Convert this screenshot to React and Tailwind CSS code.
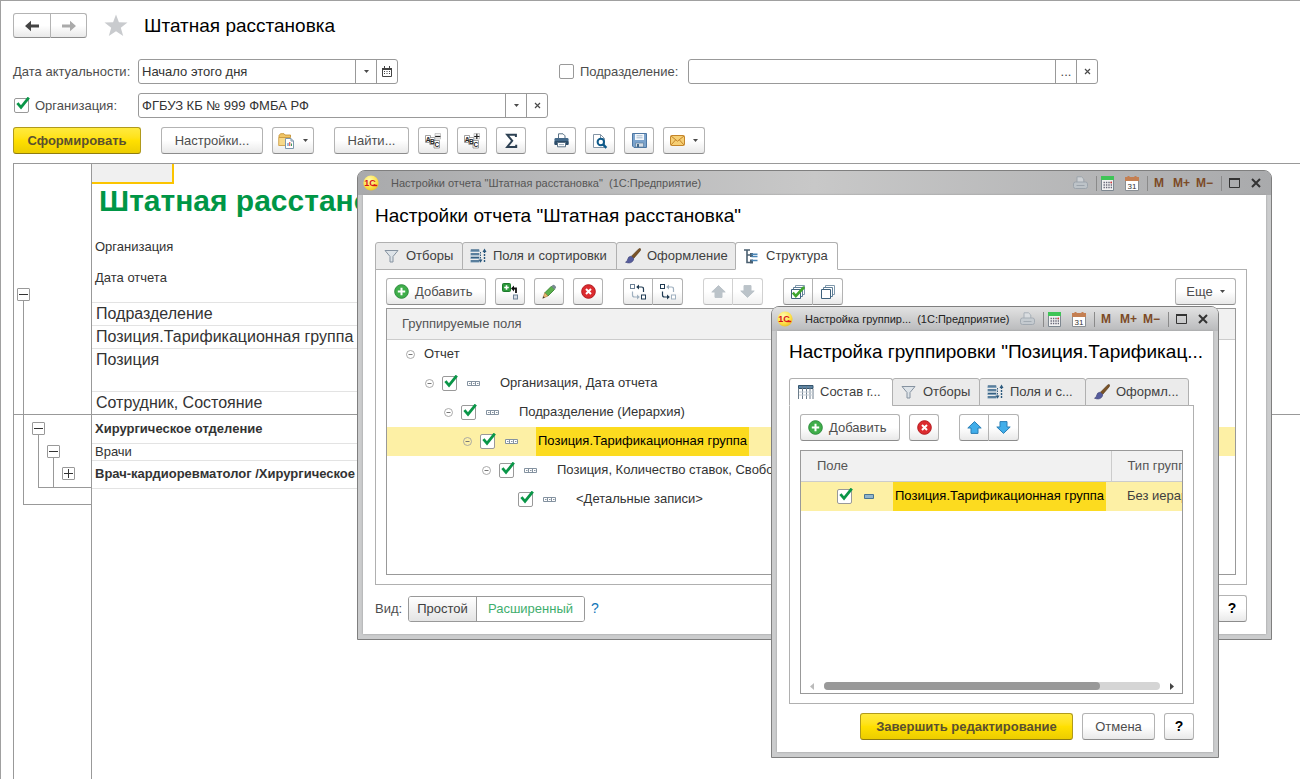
import React from "react";

const BTN =
  "flex shrink-0 items-center border border-[#b3b3b3] border-b-[#8c8c8c] bg-linear-to-b from-white from-50% to-[#e9e9e9] text-[#4d4d4d]";
const BTN_YELLOW =
  "flex h-[27px] shrink-0 items-center justify-center rounded-[3px] border border-[#b09a1c] border-b-[#8f7c10] bg-linear-to-b from-[#ffea3c] via-[#ffe000] to-[#eccd00] font-bold text-[#5a5030]";

function Btn({ className = "", children, ...rest }) {
  return (
    <button type="button" className={`${BTN} h-[27px] justify-center rounded-[3px] ${className}`} {...rest}>
      {children}
    </button>
  );
}

function AddButton() {
  return (
    <button type="button" className={`${BTN} h-[27px] w-[100px] gap-[6px] rounded-[3px] pl-[7px]`}>
      <AddIcon />
      Добавить
    </button>
  );
}

function Pair({ first, second, labels, disabled }) {
  const tone = disabled ? "opacity-60" : "";
  return (
    <div className={`flex shrink-0 ${tone}`}>
      <button type="button" disabled={disabled} aria-label={labels[0]} className={`${BTN} h-[27px] w-[30px] justify-center rounded-l-[3px]`}>
        {first}
      </button>
      <button type="button" disabled={disabled} aria-label={labels[1]} className={`${BTN} h-[27px] w-[30px] justify-center rounded-r-[3px] border-l-0`}>
        {second}
      </button>
    </div>
  );
}

function Check({ id, checked, label }) {
  return (
    <span className="relative block size-[15px] shrink-0">
      <input
        id={id}
        type="checkbox"
        defaultChecked={checked}
        aria-label={label}
        className="peer block size-[15px] appearance-none rounded-[2px] border border-[#999] bg-white"
      />
      <svg className="pointer-events-none absolute -top-px left-0 hidden peer-checked:block" width="17" height="15" viewBox="0 0 17 15">
        <path d="M3.4 6.2 L7 10.4 L14.8 0.6" fill="none" stroke="#0a9648" strokeWidth="2.8" />
      </svg>
    </span>
  );
}

const Caret = () => (
  <svg width="5" height="3" viewBox="0 0 5 3">
    <path d="M0 0H5L2.5 3Z" fill="#4a4a4a" />
  </svg>
);

const Cross = () => (
  <svg width="7" height="7" viewBox="0 0 7 7">
    <path d="M1 1L6 6M6 1L1 6" stroke="#4a4a4a" strokeWidth="1.2" />
  </svg>
);

function FieldButton({ label, children }) {
  return (
    <button type="button" aria-label={label} className="flex w-[21px] shrink-0 items-center justify-center border-l border-[#999] text-[#4a4a4a]">
      {children}
    </button>
  );
}

function Field({ id, value, className, children }) {
  return (
    <div className={`flex h-[25px] overflow-hidden rounded-[3px] border border-[#999] bg-white ${className}`}>
      <input id={id} defaultValue={value} className="min-w-0 flex-1 px-[3px] text-[#333] outline-none" />
      {children}
    </div>
  );
}

/* ---------- icons ---------- */

const ArrowLeft = ({ color }) => (
  <svg width="16" height="12" viewBox="0 0 16 12">
    <path d="M1 6L7 0.8V4.6H15V7.4H7V11.2Z" fill={color} />
  </svg>
);
const ArrowRight = ({ color }) => (
  <svg width="16" height="12" viewBox="0 0 16 12">
    <path d="M15 6L9 0.8V4.6H1V7.4H9V11.2Z" fill={color} />
  </svg>
);
const Star = () => (
  <svg width="24" height="23" viewBox="0 0 24 23">
    <path d="M12 0.5L14.9 8.2L23.5 8.6L16.8 13.8L19.2 22L12 17.3L4.8 22L7.2 13.8L0.5 8.6L9.1 8.2Z" fill="#c9cbce" />
  </svg>
);
const MiniCalendar = () => (
  <svg width="10" height="11" viewBox="0 0 10 11">
    <path d="M0.5 2.5H9.5V10.5H0.5Z" fill="#fff" stroke="#444" />
    <path d="M0 2H10V4H0Z M2 0H3V2H2Z M7 0H8V2H7Z" fill="#444" />
    <path d="M2 5.5H8M2 7.5H8" stroke="#444" strokeDasharray="1 1.5" />
  </svg>
);
const FolderReport = () => (
  <svg width="17" height="16" viewBox="0 0 17 16">
    <path d="M1 2.5L2.5 0.7H6L7 2H12.5V4.5H1Z" fill="#f0c566" stroke="#c08a2a" strokeWidth="0.8" />
    <path d="M0.7 4.5H10.5V12.5H0.7Z" fill="#f7d98a" stroke="#c9973a" strokeWidth="0.8" />
    <path d="M7.5 5.5H13L15.5 8V15.5H7.5Z" fill="#fff" stroke="#7d97ad" />
    <path d="M13 5.5V8H15.5" fill="none" stroke="#7d97ad" />
    <path d="M10 10V13" stroke="#3a7fb5" />
    <path d="M11.8 9V13" stroke="#d33" />
    <path d="M13.5 10.5V13" stroke="#3a9b5a" />
  </svg>
);
const AbcIcon = ({ plus }) => (
  <svg width="16" height="16" viewBox="0 0 16 16">
    <path d="M0.5 2.5H5.5V9.5H0.5Z" fill="#fff" stroke="#8a8a8a" strokeWidth="0.8" />
    <path d="M4.8 4.5H9.8V11.5H4.8Z" fill="#fff" stroke="#8a8a8a" strokeWidth="0.8" />
    <path d="M9 7.5H14.5V15H9Z" fill="#fff" stroke="#8a8a8a" strokeWidth="0.8" />
    <text x="0.8" y="8.5" fontSize="6.5" fontWeight="bold" fill="#222">A</text>
    <text x="5" y="10.5" fontSize="6.5" fontWeight="bold" fill="#222">B</text>
    <text x="9.5" y="13.8" fontSize="6.5" fontWeight="bold" fill="#222">C</text>
    <path d="M10 0.5H15.5V6H10Z" fill="#f2f2f2" stroke="#aaa" strokeWidth="0.6" />
    <path d={plus ? "M10.2 3.5H15.4M12.8 0.8V6" : "M10.2 3.5H15.4"} stroke="#222" strokeWidth="1.2" />
  </svg>
);
const Sigma = () => (
  <svg width="13" height="16" viewBox="0 0 13 16">
    <path d="M10.9 4V1.8H2.2L7.2 7.8L2.2 14H11.2V11.8" fill="none" stroke="#2d4153" strokeWidth="2" />
  </svg>
);
const Printer = () => (
  <svg width="15" height="15" viewBox="0 0 15 15">
    <path d="M4.5 5.5V0.8H9L11 2.8V5.5" fill="#fff" stroke="#5b7286" />
    <rect x="0.5" y="5" width="14" height="7" rx="1.2" fill="#44698a" />
    <rect x="0.5" y="8" width="14" height="4" rx="1" fill="#2c4c68" />
    <path d="M3.5 9.5H11.5V13.8H3.5Z" fill="#fff" stroke="#5b7286" />
    <path d="M5 11.6H10" stroke="#9ab" />
  </svg>
);
const PreviewIcon = () => (
  <svg width="16" height="16" viewBox="0 0 16 16">
    <path d="M1.5 1.5H8.5L12.5 5.5V14.5H1.5Z" fill="#fff" stroke="#8495a5" />
    <path d="M8.5 1.5V5.5H12.5" fill="none" stroke="#8495a5" />
    <circle cx="8.8" cy="9" r="3.2" fill="#fff" stroke="#0e5a8a" strokeWidth="2" />
    <path d="M11 11.3L14.4 14.8" stroke="#0e5a8a" strokeWidth="2.4" />
  </svg>
);
const Floppy = () => (
  <svg width="15" height="15" viewBox="0 0 15 15">
    <path d="M0.5 0.5H14.5V14.5H2L0.5 13Z" fill="#7ba3cc" stroke="#4d77a3" />
    <path d="M3 1H12V7H3Z" fill="#f4f8fc" />
    <path d="M4.5 2.8H10.5M4.5 4.8H10.5" stroke="#a5b9cc" />
    <path d="M3.5 10H11.5V14H3.5Z" fill="#d5dde5" stroke="#5d7f9f" strokeWidth="0.7" />
    <path d="M5 11H7V14H5Z" fill="#44698a" />
  </svg>
);
const Mail = () => (
  <svg width="15" height="11" viewBox="0 0 15 11">
    <rect x="0.5" y="0.5" width="14" height="10" rx="1" fill="#f6cf74" stroke="#c4852a" />
    <path d="M1 1L7.5 6.2L14 1M1 10L5.5 5M14 10L9.5 5" fill="none" stroke="#c4852a" />
  </svg>
);
const AddIcon = () => (
  <svg width="15" height="15" viewBox="0 0 15 15">
    <circle cx="7.5" cy="7.5" r="6.8" fill="#3fae4a" stroke="#2b8c3b" />
    <path d="M7.5 3.8V11.2M3.8 7.5H11.2" stroke="#fff" strokeWidth="2" />
  </svg>
);
const DeleteIcon = () => (
  <svg width="15" height="15" viewBox="0 0 15 15">
    <circle cx="7.5" cy="7.5" r="6.8" fill="#dc2b2f" stroke="#b3181d" />
    <path d="M5 5L10 10M10 5L5 10" stroke="#fff" strokeWidth="2" />
  </svg>
);
const AddGroupIcon = () => (
  <svg width="17" height="17" viewBox="0 0 17 17">
    <rect x="0.5" y="0.5" width="8" height="8" rx="1" fill="#2d9a3c" stroke="#1d7a2c" />
    <path d="M4.5 2.2V6.8M2.2 4.5H6.8" stroke="#fff" strokeWidth="1.6" />
    <path d="M14 10V5.5H11" fill="none" stroke="#111" strokeWidth="1.8" />
    <path d="M12 2.5L9 5.5L12 8.5Z" fill="#111" />
    <rect x="11.5" y="12" width="4" height="4" fill="#d5dce4" stroke="#6c8196" />
  </svg>
);
const Pencil = () => (
  <svg width="15" height="15" viewBox="0 0 15 15">
    <path d="M2.8 8.8L9.4 2.2L12.6 5.4L6 12Z" fill="#5cb04c" stroke="#2f7a2b" strokeWidth="0.8" />
    <path d="M9.4 2.2L10.8 0.9Q11.6 0.4 12.3 1.1L13.8 2.6Q14.4 3.3 13.9 4L12.6 5.4Z" fill="#7a8a92" />
    <path d="M2.8 8.8L6 12L0.8 14.2Z" fill="#e9bb72" stroke="#a8763a" strokeWidth="0.6" />
    <path d="M1.6 12.2L2.8 13.4L0.6 14.4Z" fill="#333" />
  </svg>
);
const MoveIcon = ({ down }) => {
  const light = "#9fb0bf";
  const dark = "#1f3a52";
  const a = down ? light : dark;
  const b = down ? dark : light;
  return (
    <svg width="16" height="16" viewBox="0 0 16 16">
      <rect x="0.5" y="0.5" width="4" height="4" fill="#fff" stroke={down ? dark : "#6c8196"} />
      <path d="M13.5 8V5Q13.5 3 11.5 3H8" fill="none" stroke={a} strokeWidth="1.2" />
      <path d="M9 0.4L6.2 3L9 5.6Z" fill={a} />
      <path d="M2.5 7.5V11Q2.5 13 4.5 13H7.5" fill="none" stroke={b} strokeWidth="1.2" />
      <path d="M7 10.4L9.8 13L7 15.6Z" fill={b} />
      <rect x="11.5" y="11" width="4" height="4" fill="#fff" stroke={a} />
    </svg>
  );
};
const BlockArrow = ({ down, fill, stroke }) => (
  <svg width="15" height="13" viewBox="0 0 15 13">
    <path
      d={down ? "M7.5 12.4L0.8 6H4V0.6H11V6H14.2Z" : "M7.5 0.6L0.8 7H4V12.4H11V7H14.2Z"}
      fill={fill}
      stroke={stroke}
      strokeWidth="1"
      strokeLinejoin="round"
    />
  </svg>
);
const StackIcon = ({ checked }) => (
  <svg width="16" height="16" viewBox="0 0 16 16">
    <path d="M5.5 1.5H14.5V10.5H5.5Z" fill="#fff" stroke="#7f98ac" />
    <path d="M3.5 3.5H12.5V12.5H3.5Z" fill="#fff" stroke="#5f7f98" />
    <path d="M1.5 5.5H10.5V14.5H1.5Z" fill="#fff" stroke="#3f617c" />
    {checked && <path d="M2.8 8.6L5.8 12L14.2 3" fill="none" stroke="#3fa52e" strokeWidth="2.6" />}
  </svg>
);
const Funnel = () => (
  <svg width="15" height="15" viewBox="0 0 15 15">
    <path d="M1 1.5H14L9 7.5V13H6V7.5Z" fill="#dde3e8" stroke="#8592a0" strokeLinejoin="round" />
  </svg>
);
const FieldsIcon = () => (
  <svg width="17" height="16" viewBox="0 0 17 16">
    <path d="M0.5 1.5H9.5V4H0.5Z M0.5 5H9.5V7.5H0.5Z M0.5 8.5H9.5V11H0.5Z M0.5 12H9.5V14.5H0.5Z" fill="#7fa0ba" />
    <path d="M1 2H9M1 6H9M1 9.5H9M1 13H9" stroke="#365f80" />
    <path d="M10.5 4V14" stroke="#365f80" strokeDasharray="1.5 1" />
    <path d="M8.5 11.5L10.5 14.8L12.5 11.5Z" fill="#2a587d" />
    <path d="M14.5 3V14.5" stroke="#2a587d" strokeWidth="1.4" strokeDasharray="2 1" />
    <path d="M12.5 4L14.5 0.6L16.5 4Z" fill="#2a587d" />
  </svg>
);
const Brush = () => (
  <svg width="16" height="16" viewBox="0 0 16 16">
    <path d="M15.5 0.8Q14.5 0 13.4 1.2L6.5 8.2L8.8 10.3L15 3Q16 1.6 15.5 0.8Z" fill="#7b5326" stroke="#4c3012" strokeWidth="0.6" />
    <path d="M6 8.2Q3.2 8.4 2.8 11Q2.6 13.3 0.5 14.2Q5 16 7.4 13.6Q9 12 8.6 10.4Z" fill="#565c9c" stroke="#363b74" strokeWidth="0.6" />
  </svg>
);
const TreeIcon = () => (
  <svg width="15" height="15" viewBox="0 0 15 15">
    <path d="M0 1H6M3 1V13.5H6M3 6H6" fill="none" stroke="#4a5f70" strokeWidth="1.6" />
    <path d="M6 4H9V8H6Z M6 10.5H9V14.5H6Z" fill="#4a5f70" />
    <path d="M7.5 5.2H13.5M7.5 7.4H13.5M7.5 11.6H13.5" stroke="#4a86b8" strokeWidth="1.5" />
  </svg>
);
const GridIcon = () => (
  <svg width="16" height="16" viewBox="0 0 16 16">
    <path d="M0.5 3.5H15.5V15H0.5Z" fill="#fff" />
    <path d="M0.5 1.5H15V4.5H0.5Z" fill="#5d86a6" stroke="#35546c" />
    <path d="M0.5 5V15M4.5 2V15M8.5 2V15M12 2V15M15 5V15" stroke="#6c7d8b" />
    <path d="M1 8H15M1 11H15" stroke="#c5ced6" />
  </svg>
);
const GroupMark = () => (
  <svg width="13" height="5" viewBox="0 0 13 5">
    <path d="M0.5 0.5H12.5V4.5H0.5Z M4.5 0.5V4.5M8.5 0.5V4.5" fill="#fff" stroke="#8492a0" />
    <path d="M2 2.5H3.5M6 2.5H7.5M10 2.5H11.5" stroke="#8492a0" />
  </svg>
);
const FieldMark = () => (
  <svg width="10" height="5" viewBox="0 0 10 5">
    <path d="M0.5 0.5H9.5V4.5H0.5Z" fill="#8fb4cc" stroke="#4a7592" />
  </svg>
);
const Collapse = () => (
  <svg width="9" height="9" viewBox="0 0 9 9">
    <circle cx="4.5" cy="4.5" r="4" fill="none" stroke="#a0a0a0" strokeWidth="0.9" />
    <path d="M2.5 4.5H6.5" stroke="#777" />
  </svg>
);

/* ---------- windows ---------- */

const Logo = () => (
  <svg width="16" height="16" viewBox="0 0 16 16">
    <defs>
      <radialGradient id="logo-fill" cx="0.4" cy="0.3" r="0.8">
        <stop offset="0" stopColor="#fffbb0" />
        <stop offset="0.6" stopColor="#fde148" />
        <stop offset="1" stopColor="#e6b422" />
      </radialGradient>
    </defs>
    <circle cx="8" cy="8" r="7.6" fill="url(#logo-fill)" />
    <text x="1.2" y="11" fontSize="9" fontWeight="bold" fill="#d8131c">1С</text>
    <path d="M9.5 10.5H14.2" stroke="#d8131c" strokeWidth="1.4" />
  </svg>
);

const Separator = () => <span className="h-[15px] w-px bg-[#8a8a8a]" />;

function TitleBar({ title, active }) {
  const tone = active
    ? "bg-linear-to-b from-[#e2e2e2] to-[#b9babc] text-[#222]"
    : "bg-linear-to-r from-[#a9aaac] via-[#c8c8c8] to-[#a9aaac] text-[#555]";
  return (
    <header className={`flex h-6 items-center rounded-t-[6px] pr-[10px] pl-[5px] ${tone}`}>
      <Logo />
      <span className="ml-3 flex-1 truncate text-[11px] whitespace-pre">{title}</span>
      <div className="flex items-center text-[12px] font-bold text-[#7c4a26]">
        <button type="button" aria-label="Печать" className="mr-2 opacity-60">
          <svg width="15" height="14" viewBox="0 0 15 14" className="block">
            <path d="M4 6V0.8H8.5L10.8 3V6" fill="#dfe4e9" stroke="#8b98a4" />
            <rect x="0.5" y="6" width="14" height="6.5" rx="2" fill="#c3ccd4" stroke="#8b98a4" />
            <path d="M3.5 9.5H11.5" stroke="#8b98a4" />
          </svg>
        </button>
        <Separator />
        <button type="button" aria-label="Калькулятор" className="ml-1">
          <svg width="13" height="15" viewBox="0 0 13 15" className="block">
            <path d="M0.5 0.5H12.5V14.5H0.5Z" fill="#f2f2f2" stroke="#7d8790" />
            <path d="M0 0H13V4H0Z" fill="#3fc457" />
            <path d="M2.5 6.5H11M2.5 9H11M2.5 11.5H11" stroke="#667" strokeWidth="1.4" strokeDasharray="1.4 1" />
            <path d="M9.5 5.8H11V7.2H9.5Z" fill="#d33" />
          </svg>
        </button>
        <button type="button" aria-label="Календарь" className="mr-2 ml-[11px]">
          <svg width="14" height="15" viewBox="0 0 14 15" className="block">
            <path d="M0.5 1.5H13.5V14.5H0.5Z" fill="#fff" stroke="#8a8f94" />
            <path d="M0 1H14V5H0Z M2.5 0H4.5V2H2.5Z M9.5 0H11.5V2H9.5Z" fill="#c47f52" />
            <text x="2.6" y="12.6" fontSize="8" fill="#333" fontWeight="normal">31</text>
          </svg>
        </button>
        <Separator />
        <button type="button" className="ml-[6px]">M</button>
        <button type="button" className="ml-[9px]">M+</button>
        <button type="button" className="mr-2 ml-[6px]">M−</button>
        <Separator />
        <button type="button" aria-label="Развернуть" className="ml-[7px]">
          <svg width="11" height="10" viewBox="0 0 11 10" className="block">
            <path d="M0.5 0.5H10.5V9.5H0.5Z" fill="none" stroke="#333" />
            <path d="M0 1H11" stroke="#333" strokeWidth="2" />
          </svg>
        </button>
        <button type="button" aria-label="Закрыть" className="ml-[11px]">
          <svg width="10" height="10" viewBox="0 0 10 10" className="block">
            <path d="M1 1L9 9M9 1L1 9" stroke="#333" strokeWidth="2" />
          </svg>
        </button>
      </div>
    </header>
  );
}

function Window({ title, active, className, children }) {
  return (
    <section className={`absolute flex flex-col rounded-t-[8px] border border-[#7f7f7f] bg-[#cbcccd] ${className}`}>
      <TitleBar title={title} active={active} />
      <div className="mx-[5px] mb-[5px] flex flex-1 flex-col bg-white pr-[19px] pl-3 shadow-[0_0_2px_#999]">{children}</div>
    </section>
  );
}

function Tabs({ items, active }) {
  return (
    <div role="tablist" className="relative -mb-px flex">
      {items.map(([icon, text, width], i) => (
        <button
          key={text}
          type="button"
          role="tab"
          aria-selected={i === active}
          className={`flex h-7 shrink-0 items-center gap-[6px] rounded-t-[3px] border border-[#b0b0b0] pl-[7px] whitespace-nowrap text-[#404040] ${width} ${
            i > 0 ? "-ml-px" : ""
          } ${i === active ? "border-b-white bg-white" : "bg-[#ebebeb]"}`}
        >
          <span className="flex w-[17px] justify-center">{icon}</span>
          {text}
        </button>
      ))}
    </div>
  );
}

/* ---------- report ---------- */

function Expander({ plus }) {
  return (
    <button
      type="button"
      aria-label={plus ? "Развернуть группу" : "Свернуть группу"}
      className="flex size-[13px] items-center justify-center rounded-[1px] border border-[#999] bg-white"
    >
      <svg width="9" height="9" viewBox="0 0 9 9">
        <path d={plus ? "M0 4.5H9M4.5 0V9" : "M0 4.5H9"} stroke="#333" />
      </svg>
    </button>
  );
}

function GroupOutline() {
  return (
    <div className="absolute top-[124px] left-[3px] w-[75px]">
      <Expander />
      <div className="ml-[6px] h-[204px] border-b border-l border-[#999] pt-[121px] pl-2">
        <Expander />
        <div className="ml-[6px] h-[53px] border-b border-l border-[#999] pt-[10px] pl-2">
          <Expander />
          <div className="ml-[6px] h-[29px] border-l border-[#999] pt-[9px] pl-2">
            <Expander plus />
          </div>
        </div>
      </div>
    </div>
  );
}

function Report() {
  return (
    <main className="relative flex flex-1 flex-col border-t border-l border-[#999] text-[#333]">
      <div className="flex border-b border-[#999]">
        <div className="w-[78px] border-r border-[#999]" />
        <table className="w-[1000px] border-collapse text-left text-[16px]">
          <tbody>
            <tr className="h-5">
              <td className="p-0">
                <div className="h-5 w-[82px] border-r-2 border-b-2 border-[#fbc400] bg-[#f0f0f0]" />
              </td>
            </tr>
            <tr className="h-[47px] align-top">
              <td className="px-[7px] py-0 text-[30px] leading-[34px] font-bold text-[#009646]">Штатная расстановка</td>
            </tr>
            <tr className="h-[31px]">
              <td className="px-[3px] py-0 text-[13px]">Организация</td>
            </tr>
            <tr className="h-10 align-top">
              <td className="border-b border-[#e3e3e3] px-[3px] py-0 text-[13px] leading-[31px]">Дата отчета</td>
            </tr>
            <tr className="h-[23px]">
              <td className="border-b border-[#e3e3e3] px-1 py-0 leading-[22px]">Подразделение</td>
            </tr>
            <tr className="h-[23px]">
              <td className="border-b border-[#e3e3e3] px-1 py-0 leading-[22px]">Позиция.Тарификационная группа</td>
            </tr>
            <tr className="h-[43px] align-top">
              <td className="border-b border-[#e3e3e3] px-1 py-0 leading-[22px]">Позиция</td>
            </tr>
            <tr className="h-[23px]">
              <td className="px-1 py-0 leading-[22px]">Сотрудник, Состояние</td>
            </tr>
          </tbody>
        </table>
      </div>
      <div className="flex flex-1">
        <div className="w-[78px] border-r border-[#999]" />
        <table className="w-[1000px] self-start border-collapse text-left text-[13px]">
          <tbody>
            <tr className="h-7">
              <td className="border-b border-[#e3e3e3] px-[3px] py-0 font-bold">Хирургическое отделение</td>
            </tr>
            <tr className="h-[17px]">
              <td className="border-b border-[#e3e3e3] px-[3px] py-0 leading-4">Врачи</td>
            </tr>
            <tr className="h-7">
              <td className="border-b border-[#e3e3e3] px-[3px] py-0 font-bold">
                Врач-кардиоревматолог /Хирургическое отделение/
              </td>
            </tr>
          </tbody>
        </table>
      </div>
      <GroupOutline />
    </main>
  );
}

/* ---------- report settings ---------- */

const TREE = [
  { text: "Отчет", indent: "pl-[19px]", root: true },
  { text: "Организация, Дата отчета", indent: "pl-[38px]" },
  { text: "Подразделение (Иерархия)", indent: "pl-[57px]" },
  { text: "Позиция.Тарификационная группа", indent: "pl-[76px]", selected: true },
  { text: "Позиция, Количество ставок, Свободно", indent: "pl-[95px]" },
  { text: "<Детальные записи>", indent: "pl-[114px]", leaf: true },
];

function TreeRow({ text, indent, root, leaf, selected }) {
  return (
    <tr className={selected ? "bg-[#fdf0a5]" : ""}>
      <td className="p-0">
        <div className={`flex h-[29px] items-center ${indent}`}>
          {leaf ? (
            <span className="w-[9px]" />
          ) : (
            <button type="button" aria-label="Свернуть">
              <Collapse />
            </button>
          )}
          {!root && (
            <span className="ml-2 flex items-center gap-[10px]">
              <Check checked label={text} />
              <GroupMark />
            </span>
          )}
          <span
            className={`flex h-full items-center whitespace-nowrap ${root ? "ml-2 px-[1px]" : "ml-[18px] px-[2px]"} ${
              selected ? "bg-[#fcdb1f] text-black" : "text-[#333]"
            }`}
          >
            {text}
          </span>
        </div>
      </td>
    </tr>
  );
}

function SettingsWindow() {
  return (
    <Window title={'Настройки отчета "Штатная расстановка"  (1С:Предприятие)'} className="top-[169px] left-[356px] h-[470px] w-[915px]">
      <h2 className="mt-[9px] mb-[14px] text-[19px] leading-6 text-black">Настройки отчета "Штатная расстановка"</h2>
      <Tabs
        active={3}
        items={[
          [<Funnel />, "Отборы", "w-[88px]"],
          [<FieldsIcon />, "Поля и сортировки", "w-[155px]"],
          [<Brush />, "Оформление", "w-[120px]"],
          [<TreeIcon />, "Структура", "w-[103px]"],
        ]}
      />
      <div className="flex flex-1 flex-col border border-[#b0b0b0] px-[10px] pt-2 pb-[9px]">
        <div className="flex">
          <AddButton />
          <Btn aria-label="Добавить группировку" className="ml-[9px] w-[30px]"><AddGroupIcon /></Btn>
          <Btn aria-label="Изменить" className="mr-[9px] ml-[9px] w-[30px]"><Pencil /></Btn>
          <Btn aria-label="Удалить" className="mr-5 w-[30px]"><DeleteIcon /></Btn>
          <Pair labels={["Сгруппировать", "Разгруппировать"]} first={<MoveIcon />} second={<MoveIcon down />} />
          <span className="w-5" />
          <Pair
            disabled
            labels={["Переместить вверх", "Переместить вниз"]}
            first={<BlockArrow fill="#8f9ca6" stroke="#8f9ca6" />}
            second={<BlockArrow down fill="#8f9ca6" stroke="#8f9ca6" />}
          />
          <span className="w-5" />
          <Pair labels={["Установить флажки", "Снять флажки"]} first={<StackIcon checked />} second={<StackIcon />} />
          <Btn className="ml-auto w-[61px] gap-[7px]">Еще<Caret /></Btn>
        </div>
        <div className="mt-[3px] flex-1 border border-[#999]">
          <table className="w-full border-collapse text-left">
            <thead>
              <tr>
                <th className="h-[30px] border-b border-[#ccc] bg-[#f1f1f1] py-0 pl-[15px] font-normal text-[#555]">Группируемые поля</th>
              </tr>
            </thead>
            <tbody>
              {TREE.map((row) => (
                <TreeRow key={row.text} {...row} />
              ))}
            </tbody>
          </table>
        </div>
      </div>
      <div className="mt-[10px] mb-3 flex items-center">
        <span className="w-[33px] text-[#4d4d4d]">Вид:</span>
        <div className="flex h-[26px] overflow-hidden rounded-[3px] border border-[#999]">
          <button type="button" className="w-[68px] border-r border-[#999] bg-linear-to-b from-white to-[#e4e4e4] text-[#404040]">Простой</button>
          <button type="button" className="w-[107px] bg-white text-[#3fae6e]">Расширенный</button>
        </div>
        <button type="button" aria-label="Подсказка" className="ml-[6px] text-[14px] text-[#0f75b8]">?</button>
        <Btn aria-label="Справка" className="ml-auto w-[30px] text-[14px] font-bold text-black">?</Btn>
      </div>
    </Window>
  );
}

/* ---------- grouping settings ---------- */

function GroupingWindow() {
  return (
    <Window active title="Настройка группир...  (1С:Предприятие)" className="top-[305px] left-[770px] h-[452px] w-[448px]">
      <h2 className="mt-[9px] mb-[14px] text-[19px] leading-6 whitespace-nowrap text-black">Настройка группировки "Позиция.Тарификац...</h2>
      <Tabs
        active={0}
        items={[
          [<GridIcon />, "Состав г...", "w-[104px]"],
          [<Funnel />, "Отборы", "w-[88px]"],
          [<FieldsIcon />, "Поля и с...", "w-[107px]"],
          [<Brush />, "Оформл...", "w-[104px]"],
        ]}
      />
      <div className="flex flex-1 flex-col border border-[#b0b0b0] px-[10px] pt-2 pb-[9px]">
        <div className="flex">
          <AddButton />
          <Btn aria-label="Удалить" className="mr-5 ml-[9px] w-[30px]"><DeleteIcon /></Btn>
          <Pair
            labels={["Переместить вверх", "Переместить вниз"]}
            first={<BlockArrow fill="#41aeea" stroke="#2a7eb5" />}
            second={<BlockArrow down fill="#41aeea" stroke="#2a7eb5" />}
          />
        </div>
        <div className="mt-[9px] flex flex-1 flex-col overflow-hidden border border-[#999]">
          <table className="w-[460px] table-fixed border-collapse text-left">
            <thead className="bg-[#f1f1f1] text-[#555]">
              <tr>
                <th className="h-[30px] w-[310px] border-r border-b border-[#ccc] py-0 pl-4 font-normal">Поле</th>
                <th className="border-b border-[#ccc] py-0 pl-4 font-normal whitespace-nowrap">Тип группировки</th>
              </tr>
            </thead>
            <tbody>
              <tr className="bg-[#fdf0a5]">
                <td className="p-0">
                  <div className="flex h-[29px] items-center pl-9">
                    <Check checked label="Позиция.Тарификационная группа" />
                    <span className="ml-3 w-[29px]"><FieldMark /></span>
                    <span className="flex h-full items-center bg-[#fcdb1f] px-[2px] whitespace-nowrap text-black">Позиция.Тарификационная группа</span>
                  </div>
                </td>
                <td className="py-0 pl-4 whitespace-nowrap text-[#404040]">Без иерархии</td>
              </tr>
            </tbody>
          </table>
          <div className="mt-auto flex items-center pr-2 pb-[3px] pl-[9px]">
            <svg width="4" height="7" viewBox="0 0 4 7"><path d="M4 0V7L0 3.5Z" fill="#bbb" /></svg>
            <div className="mx-[10px] h-2 flex-1 rounded-full bg-[#d5d5d5]">
              <div className="h-2 w-[82%] rounded-full bg-[#999]" />
            </div>
            <svg width="4" height="7" viewBox="0 0 4 7"><path d="M0 0V7L4 3.5Z" fill="#444" /></svg>
          </div>
        </div>
      </div>
      <div className="mt-[9px] mb-3 flex justify-end gap-[9px]">
        <button type="button" className={`${BTN_YELLOW} w-[213px]`}>Завершить редактирование</button>
        <Btn className="w-[73px]">Отмена</Btn>
        <Btn aria-label="Справка" className="w-[30px] text-[14px] font-bold text-black">?</Btn>
      </div>
    </Window>
  );
}

export default function App() {
  return (
    <div className="relative flex min-h-screen flex-col overflow-hidden border-t border-l border-[#a0a0a0] bg-white pt-3 pl-3 font-['Liberation_Sans',Arial,sans-serif] text-[13px] text-[#4d4d4d]">
      <header className="mb-[21px] flex h-[25px] items-center">
        <div className="flex">
          <button type="button" aria-label="Назад" className={`${BTN} h-[25px] w-[38px] justify-center rounded-l-[3px]`}><ArrowLeft color="#444" /></button>
          <button type="button" aria-label="Вперед" className={`${BTN} h-[25px] w-[36px] justify-center rounded-r-[3px] border-l-0`}><ArrowRight color="#aaa" /></button>
        </div>
        <button type="button" aria-label="В избранное" className="mr-4 ml-[17px]"><Star /></button>
        <h1 className="pt-[2px] text-[19px] text-black">Штатная расстановка</h1>
      </header>

      <div className="mb-[9px] flex flex-col gap-[9px]">
        <div className="flex items-center">
          <label htmlFor="date" className="w-[125px]">Дата актуальности:</label>
          <Field id="date" value="Начало этого дня" className="w-[260px]">
            <FieldButton label="Выбрать"><Caret /></FieldButton>
            <FieldButton label="Календарь"><MiniCalendar /></FieldButton>
          </Field>
          <span className="ml-[161px]"><Check id="unit-on" label="Отбор по подразделению" /></span>
          <label htmlFor="unit" className="ml-[6px] w-[108px]">Подразделение:</label>
          <Field id="unit" value="" className="w-[410px]">
            <FieldButton label="Выбрать">...</FieldButton>
            <FieldButton label="Очистить"><Cross /></FieldButton>
          </Field>
        </div>
        <div className="flex items-center">
          <span className="ml-px"><Check id="org-on" checked label="Отбор по организации" /></span>
          <label htmlFor="org" className="ml-[6px] w-[103px]">Организация:</label>
          <Field id="org" value="ФГБУЗ КБ № 999 ФМБА РФ" className="w-[410px]">
            <FieldButton label="Выбрать"><Caret /></FieldButton>
            <FieldButton label="Очистить"><Cross /></FieldButton>
          </Field>
        </div>
        <div className="flex gap-5">
          <button type="button" className={`${BTN_YELLOW} w-[128px]`}>Сформировать</button>
          <div className="flex gap-[9px]">
            <Btn className="w-[102px]">Настройки...</Btn>
            <Btn aria-label="Варианты отчета" className="w-[42px] gap-2"><FolderReport /><Caret /></Btn>
          </div>
          <div className="flex gap-[9px]">
            <Btn className="w-[75px]">Найти...</Btn>
            <Btn aria-label="Свернуть группы" className="w-[30px]"><AbcIcon /></Btn>
            <Btn aria-label="Развернуть группы" className="w-[30px]"><AbcIcon plus /></Btn>
            <Btn aria-label="Сумма" className="w-[30px]"><Sigma /></Btn>
          </div>
          <div className="flex gap-[9px]">
            <Btn aria-label="Печать" className="w-[30px]"><Printer /></Btn>
            <Btn aria-label="Предварительный просмотр" className="w-[30px]"><PreviewIcon /></Btn>
            <Btn aria-label="Сохранить" className="w-[30px]"><Floppy /></Btn>
            <Btn aria-label="Отправить" className="w-[42px] gap-2"><Mail /><Caret /></Btn>
          </div>
        </div>
      </div>

      <Report />
      <SettingsWindow />
      <GroupingWindow />
    </div>
  );
}
